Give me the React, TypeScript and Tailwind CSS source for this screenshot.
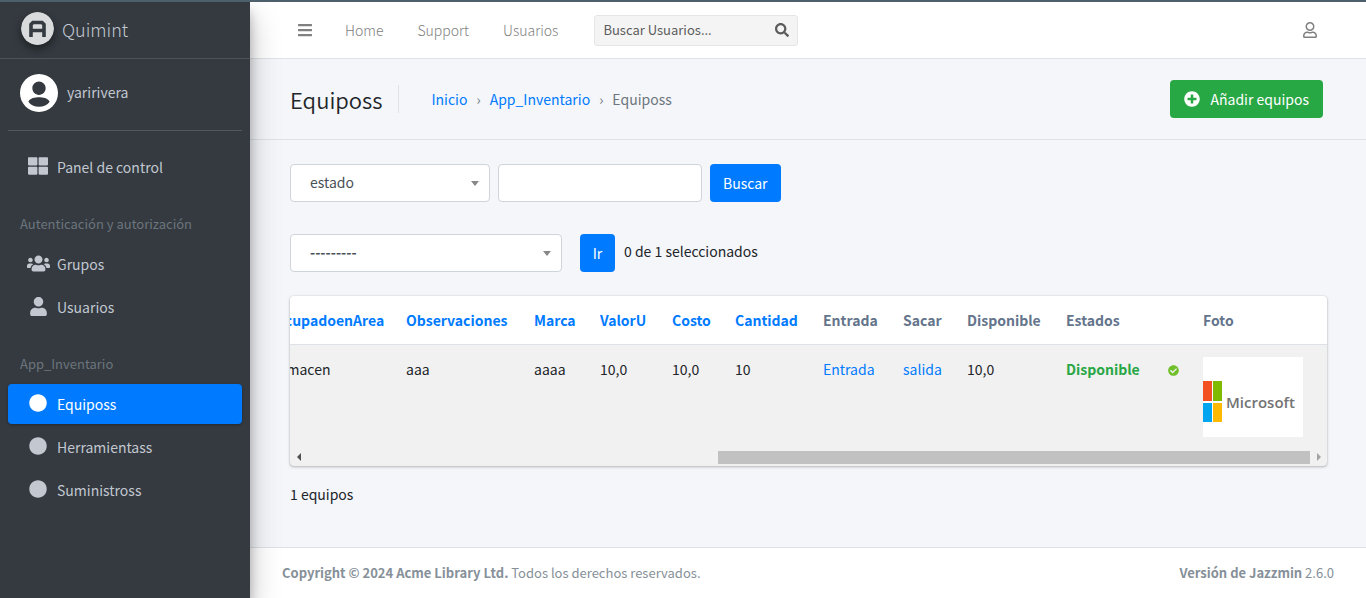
import type { ReactNode } from "react";
import {
  FaBars,
  FaCheckCircle,
  FaCircle,
  FaPlusCircle,
  FaRegUser,
  FaSearch,
  FaThLarge,
  FaUser,
  FaUsers,
} from "react-icons/fa";

function BrandLogo() {
  return (
    <svg viewBox="0 0 33 33" className="size-[33px] rounded-full shadow-[0_4px_8px_rgba(0,0,0,0.45)]" aria-hidden="true">
      <circle cx="16.5" cy="16.5" r="16.5" fill="#d9dadb" />
      <path d="M10 25V12.5L12 10.5H21L23 12.5V25M10 18.5H23" fill="none" stroke="#343a40" strokeWidth="3.6" />
    </svg>
  );
}

function Avatar() {
  return (
    <svg viewBox="2 2 20 20" className="size-[38px]" fill="#fff" aria-hidden="true">
      <path d="M12 2C6.48 2 2 6.48 2 12s4.48 10 10 10 10-4.48 10-10S17.52 2 12 2zm0 4c1.93 0 3.5 1.57 3.5 3.5S13.93 13 12 13s-3.5-1.57-3.5-3.5S10.07 6 12 6zm0 13.300c-2.400 0-4.400-1-5.600-2.700.8-2 3.600-2.400 5.600-2.400s4.800.4 5.600 2.400c-1.200 1.700-3.200 2.700-5.600 2.700z" />
    </svg>
  );
}

function NavItem({ icon, label, active = false }: { icon: ReactNode; label: string; active?: boolean }) {
  return (
    <li>
      <a
        href="#"
        aria-current={active ? "page" : undefined}
        className={
          active
            ? "flex h-10 items-center rounded bg-[#007bff] pl-4 text-white shadow-[0_1px_3px_rgba(0,0,0,0.3)]"
            : "flex h-10 items-center rounded pl-4 text-[#c2c7d0]"
        }
      >
        <span className="mr-[5px] flex w-7 justify-center pb-[2px]">{icon}</span>
        <span>{label}</span>
      </a>
    </li>
  );
}

function Sidebar() {
  return (
    <aside className="z-10 w-[250px] shrink-0 bg-[#343a40] text-[#c2c7d0] shadow-[0_14px_28px_rgba(0,0,0,0.25),0_10px_10px_rgba(0,0,0,0.22)]">
      <a href="#" className="flex h-[57px] items-center gap-2 border-b border-[#4b545c] pb-[3px] pl-[21px] text-lg leading-6 font-light">
        <BrandLogo />
        <span>Quimint</span>
      </a>
      <div className="px-2">
        <a href="#" className="flex h-18 items-center gap-[9px] border-b border-[#4f5962] pb-[3px] pl-3">
          <Avatar />
          <span className="pb-[2px]">yaririvera</span>
        </a>
        <nav aria-label="Principal" className="pt-4">
          <ul>
            <NavItem icon={<FaThLarge size={20} />} label="Panel de control" />
          </ul>
          <h2 className="mt-[17px] flex h-10 items-center pl-3 text-[13px] text-[#6c757d]">Autenticación y autorización</h2>
          <ul className="flex flex-col gap-[3px]">
            <NavItem icon={<FaUsers size={23} />} label="Grupos" />
            <NavItem icon={<FaUser size={19} />} label="Usuarios" />
          </ul>
          <h2 className="mt-[17px] flex h-10 items-center pl-3 text-[13px] text-[#6c757d]">App_Inventario</h2>
          <ul className="flex flex-col gap-[3px]">
            <NavItem icon={<FaCircle size={18} />} label="Equiposs" active />
            <NavItem icon={<FaCircle size={18} />} label="Herramientass" />
            <NavItem icon={<FaCircle size={18} />} label="Suministross" />
          </ul>
        </nav>
      </div>
    </aside>
  );
}

function TopBar() {
  return (
    <header className="flex h-[57px] items-center border-b border-[#dee2e6] bg-white pr-10 pl-[47px] text-[#808080]">
      <button type="button" aria-label="Menú" className="mr-8">
        <FaBars size={16} />
      </button>
      <nav aria-label="Enlaces" className="flex gap-[34px] font-light">
        <a href="#">Home</a>
        <a href="#">Support</a>
        <a href="#">Usuarios</a>
      </nav>
      <form role="search" className="ml-9 flex h-[31px] w-[204px] items-center rounded-[3px] border border-[#e6e6e6] bg-[#f4f4f4]">
        <input
          type="search"
          aria-label="Buscar Usuarios"
          placeholder="Buscar Usuarios..."
          className="min-w-0 flex-1 bg-transparent pl-2 text-[13px] text-[#495057] outline-none placeholder:text-[#5c5c5c]"
        />
        <button type="button" aria-label="Buscar" className="px-2 text-[#5c5c5c]">
          <FaSearch size={14} />
        </button>
      </form>
      <button type="button" aria-label="Cuenta" className="ml-auto px-2">
        <FaRegUser size={16} />
      </button>
    </header>
  );
}

function SelectBox({ label, value, className }: { label: string; value: string; className: string }) {
  return (
    <div className={className}>
      <select
        aria-label={label}
        className="h-[38px] w-full appearance-none rounded border border-[#ced4da] bg-white pr-8 pb-[2px] pl-[19px] text-[#495057]"
      >
        <option>{value}</option>
      </select>
      <svg viewBox="0 0 8 5" className="pointer-events-none absolute top-[17px] right-[11px] h-[5px] w-2" fill="#888" aria-hidden="true">
        <path d="M0 0H8L4 5Z" />
      </svg>
    </div>
  );
}

function MicrosoftPhoto() {
  return (
    <svg viewBox="0 0 100 80" className="h-20 w-[100px]" role="img" aria-label="Microsoft">
      <rect width="100" height="80" fill="#fff" />
      <rect x="0" y="24" width="9" height="20" fill="#f25022" />
      <rect x="10" y="24" width="9" height="20" fill="#7fba00" />
      <rect x="0" y="46" width="9" height="19" fill="#00a4ef" />
      <rect x="10" y="46" width="9" height="19" fill="#ffb900" />
      <text x="23" y="51" fontSize="15" fontWeight="600" fill="#737373" fontFamily="'Open Sans', sans-serif">
        Microsoft
      </text>
    </svg>
  );
}

const columns = [
  { name: "OcupadoenArea", sortable: true, width: "w-[132px]" },
  { name: "Observaciones", sortable: true, width: "w-[128px]" },
  { name: "Marca", sortable: true, width: "w-[66px]" },
  { name: "ValorU", sortable: true, width: "w-[72px]" },
  { name: "Costo", sortable: true, width: "w-[63px]" },
  { name: "Cantidad", sortable: true, width: "w-[88px]" },
  { name: "Entrada", sortable: false, width: "w-[80px]" },
  { name: "Sacar", sortable: false, width: "w-[64px]" },
  { name: "Disponible", sortable: false, width: "w-[99px]" },
  { name: "Estados", sortable: false, width: "w-[137px]" },
  { name: "Foto", sortable: false, width: "w-[136px]" },
];

const cell = "px-3 pt-3 pb-3 align-top";

function Results() {
  return (
    <section aria-label="Equipos" className="overflow-hidden rounded bg-[#f1f1f1] shadow-[0_0_1px_rgba(0,0,0,0.25),0_1px_3px_rgba(0,0,0,0.25)]">
      <div className="flex justify-end overflow-hidden">
        <table className="w-[1065px] shrink-0 table-fixed border-collapse text-left">
          <thead className="bg-white">
            <tr className="h-12 border-b border-[#dee2e6]">
              {columns.map((c) => (
                <th key={c.name} scope="col" className={c.width}>
                  {c.sortable ? (
                    <a href="#" className="px-3 font-bold text-[#007bff]">{c.name}</a>
                  ) : (
                    <span className="px-3 font-bold text-[#64748b]">{c.name}</span>
                  )}
                </th>
              ))}
            </tr>
          </thead>
          <tbody>
            <tr className="h-[104px]">
              <td className={cell}>Almacen</td>
              <td className={cell}>aaa</td>
              <td className={cell}>aaaa</td>
              <td className={cell}>10,0</td>
              <td className={cell}>10,0</td>
              <td className={cell}>10</td>
              <td className={cell}><a href="#" className="text-[#007bff]">Entrada</a></td>
              <td className={cell}><a href="#" className="text-[#007bff]">salida</a></td>
              <td className={cell}>10,0</td>
              <td className={cell}>
                <span className="flex items-center justify-between font-bold text-[#28a745]">
                  Disponible
                  <FaCheckCircle size={11} color="#70bf2b" className="mt-1" />
                </span>
              </td>
              <td className={cell}><MicrosoftPhoto /></td>
            </tr>
          </tbody>
        </table>
      </div>
      <div className="flex h-[17px] items-center">
        <button type="button" aria-label="Desplazar a la izquierda" className="flex w-[17px] justify-center">
          <svg viewBox="0 0 4 8" className="h-2 w-1" fill="#505050"><path d="M4 0V8L0 4Z" /></svg>
        </button>
        <div className="flex flex-1 justify-end">
          <div className="h-[13px] w-[59%] bg-[#c1c1c1]" />
        </div>
        <button type="button" aria-label="Desplazar a la derecha" className="flex w-[17px] justify-center">
          <svg viewBox="0 0 4 8" className="h-2 w-1" fill="#a3a3a3"><path d="M0 0V8L4 4Z" /></svg>
        </button>
      </div>
    </section>
  );
}

export default function App() {
  return (
    <div className="flex min-h-screen flex-col bg-[#f4f6f9] font-['Source_Sans_Pro','Noto_Sans_CJK_SC',sans-serif] text-sm leading-6 text-[#212529]">
      <div className="z-20 h-[2px] bg-[#4d5f6b]" />
      <div className="flex flex-1">
        <Sidebar />
        <div className="flex min-w-0 flex-1 flex-col">
          <TopBar />
          <div className="flex h-[81px] items-center border-b border-[#dee2e6] pr-[43px] pl-10">
            <h1 className="border-r border-[#dee2e6] pr-4 text-[22px] leading-7 font-[350]">Equiposs</h1>
            <nav aria-label="Ruta" className="ml-8 flex gap-[9px] text-[#6c757d]">
              <a href="#" className="text-[#007bff]">Inicio</a>
              <span>›</span>
              <a href="#" className="text-[#007bff]">App_Inventario</a>
              <span>›</span>
              <span>Equiposs</span>
            </nav>
            <a href="#" className="ml-auto flex h-[38px] items-center gap-[10px] rounded bg-[#28a745] px-[14px] text-white">
              <FaPlusCircle size={16} />
              Añadir equipos
            </a>
          </div>
          <main className="flex-1 pt-6 pr-[39px] pb-10 pl-10">
            <form className="flex gap-2">
              <SelectBox label="Estado" value="estado" className="relative w-[200px]" />
              <input type="text" aria-label="Texto de búsqueda" className="h-[38px] w-[204px] rounded border border-[#ced4da] bg-white px-3" />
              <button type="button" className="h-[38px] rounded bg-[#007bff] px-[13px] text-white">Buscar</button>
            </form>
            <form className="mt-8 flex items-center">
              <SelectBox label="Acción" value="---------" className="relative w-[272px] font-bold" />
              <button type="button" className="mr-[9px] ml-[18px] h-[38px] w-[35px] rounded bg-[#007bff] text-white">Ir</button>
              <span className="pb-1">0 de 1 seleccionados</span>
            </form>
            <div className="mt-6">
              <Results />
            </div>
            <p className="mt-4">1 equipos</p>
          </main>
          <footer className="flex h-[51px] items-center justify-between border-t border-[#dee2e6] bg-white px-8 text-[13px] text-[#869099]">
            <span><strong>Copyright © 2024 Acme Library Ltd.</strong> Todos los derechos reservados.</span>
            <span><strong>Versión de Jazzmin</strong> 2.6.0</span>
          </footer>
        </div>
      </div>
    </div>
  );
}
